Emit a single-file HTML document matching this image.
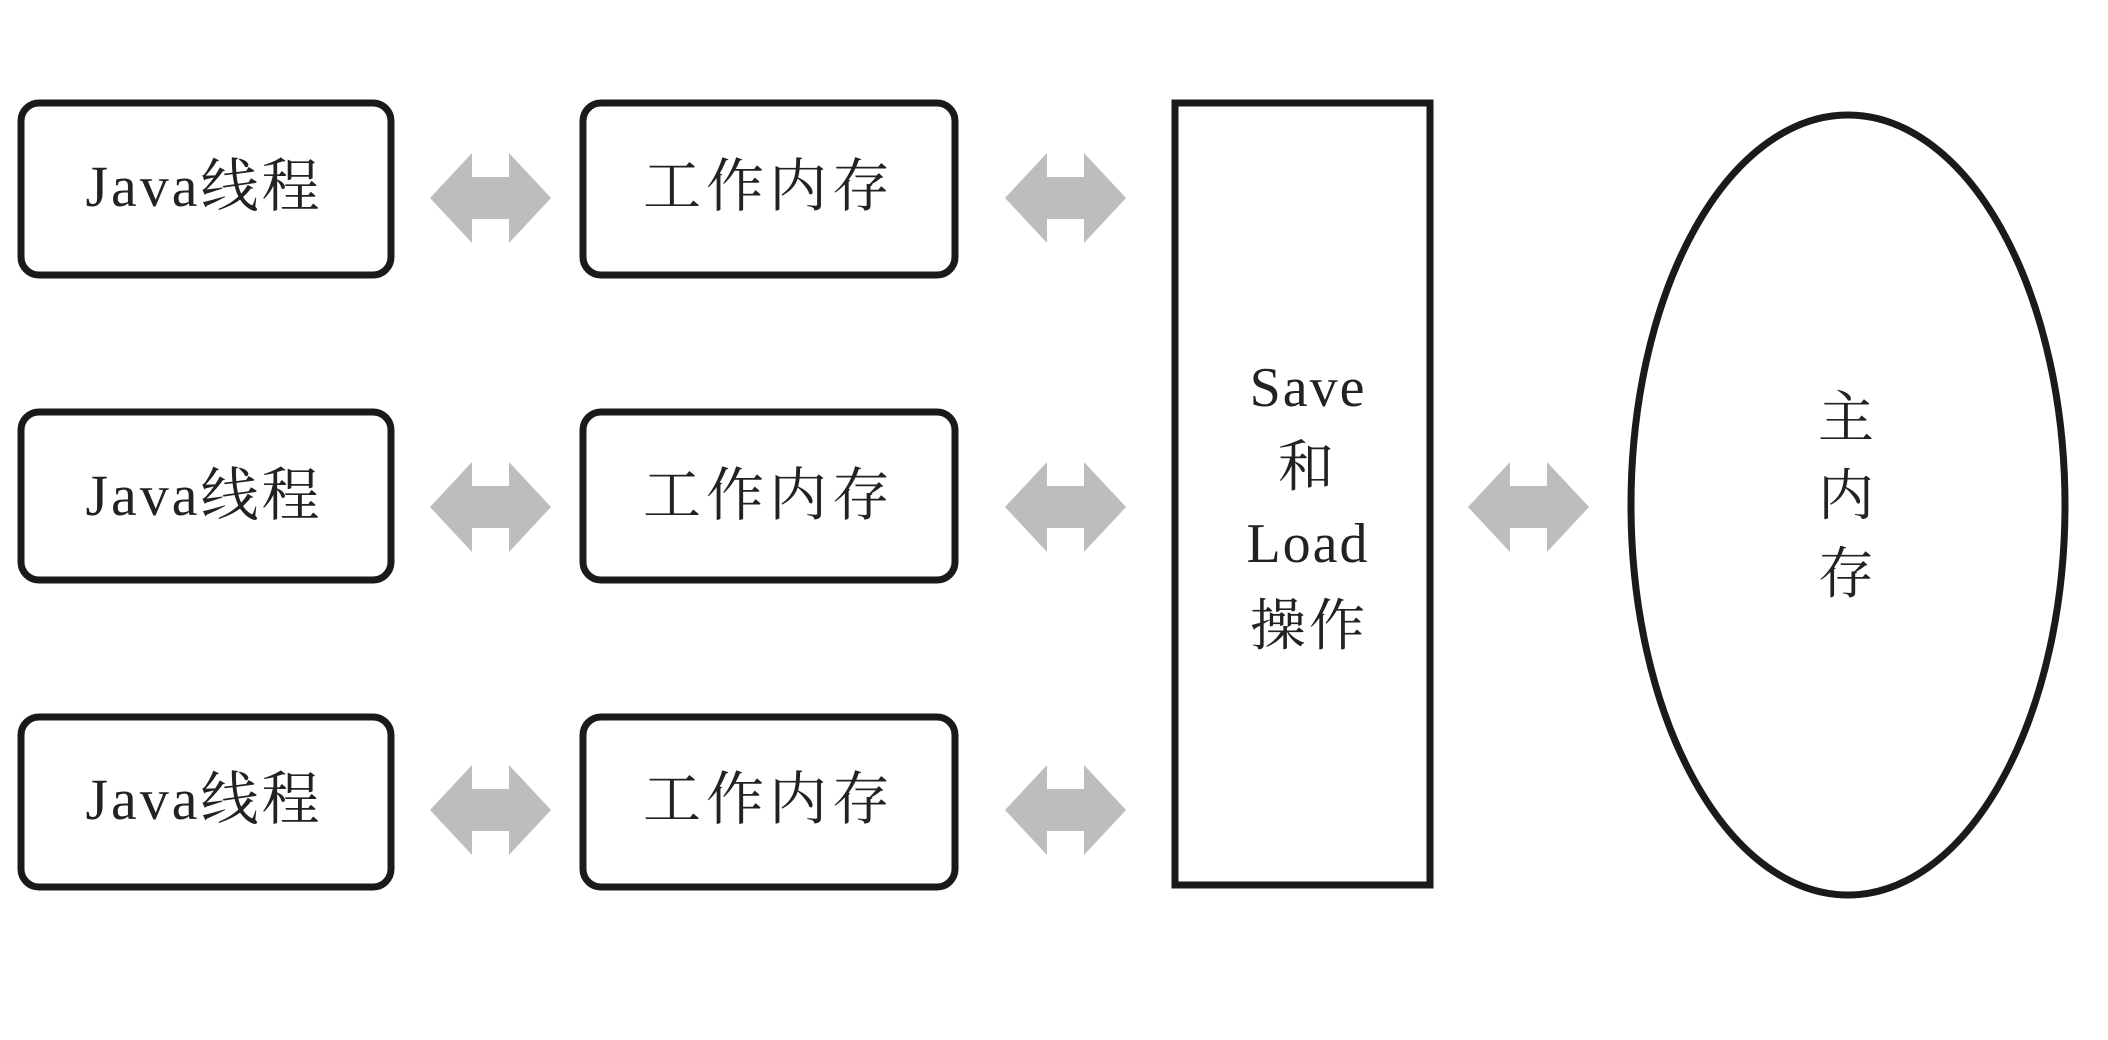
<!DOCTYPE html>
<html><head><meta charset="utf-8"><style>
html,body{margin:0;padding:0;background:#fff;width:2108px;height:1040px;overflow:hidden}
text{font-family:"Liberation Serif","Noto Serif CJK SC",serif;fill:#222}
</style></head><body>
<svg width="2108" height="1040" viewBox="0 0 2108 1040" xmlns="http://www.w3.org/2000/svg">
<defs>
<polygon id="arr" points="0,45 42,0 42,24 79,24 79,0 121,45 79,90 79,66 42,66 42,90" fill="#bdbdbd"/>
</defs>
<g fill="none" stroke="#1a1a1a" stroke-width="7">
<rect x="21" y="103" width="370" height="172" rx="18"/>
<rect x="21" y="412" width="370" height="168" rx="18"/>
<rect x="21" y="717" width="370" height="170" rx="18"/>
<rect x="583" y="103" width="372" height="172" rx="18"/>
<rect x="583" y="412" width="372" height="168" rx="18"/>
<rect x="583" y="717" width="372" height="170" rx="18"/>
<rect x="1175" y="103" width="255" height="782"/>
<ellipse cx="1848" cy="505" rx="217" ry="390"/>
</g>
<use href="#arr" x="430" y="153"/><use href="#arr" x="1005" y="153"/>
<use href="#arr" x="430" y="462"/><use href="#arr" x="1005" y="462"/>
<use href="#arr" x="430" y="765"/><use href="#arr" x="1005" y="765"/>
<use href="#arr" x="1468" y="462"/>
<g font-size="58" text-anchor="middle">
<g letter-spacing="3">
<text x="204" y="206">Java线程</text>
<text x="204" y="515">Java线程</text>
<text x="204" y="819">Java线程</text>
</g>
<g letter-spacing="5">
<text x="769" y="206">工作内存</text>
<text x="769" y="515">工作内存</text>
<text x="769" y="819">工作内存</text>
</g>
<g font-size="56" letter-spacing="2">
<text x="1308" y="406">Save</text>
<text x="1307" y="486">和</text>
<text x="1308" y="562">Load</text>
<text x="1309" y="645" letter-spacing="3">操作</text>
</g>
<g font-size="56">
<text x="1846" y="437">主</text>
<text x="1846" y="515">内</text>
<text x="1846" y="593">存</text>
</g>
</g>
</svg>
</body></html>
